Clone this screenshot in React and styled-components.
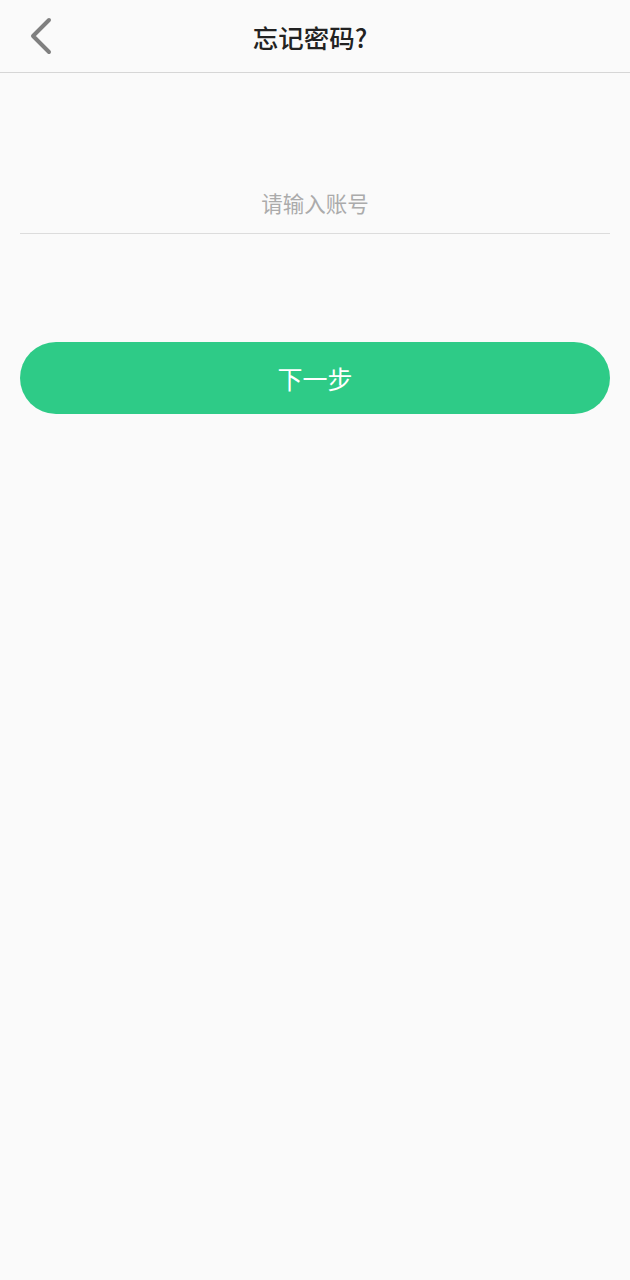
import React from 'react';
import styled, { createGlobalStyle } from 'styled-components';

const GlobalStyle = createGlobalStyle`
  html, body {
    margin: 0;
    padding: 0;
    background: #fafafa;
  }
  body {
    font-family: "Noto Sans CJK SC", "Noto Sans", sans-serif;
  }
`;

const Page = styled.div`
  min-height: 1280px;
  background: #fafafa;
  display: flex;
  flex-direction: column;
`;

const Header = styled.header`
  height: 72px;
  border-bottom: 1px solid #d6d6d6;
  display: grid;
  grid-template-columns: 70px 1fr 80px;
  align-items: center;
`;

const BackButton = styled.button`
  border: none;
  background: none;
  padding: 0 0 0 24px;
  height: 72px;
  display: flex;
  align-items: center;
  cursor: pointer;
`;

const Title = styled.h1`
  margin: 0;
  text-align: center;
  font-size: 25.5px;
  font-weight: 500;
  color: #222;
`;

const Form = styled.div`
  padding: 100px 20px 0;
  display: flex;
  flex-direction: column;
`;

const Input = styled.input`
  border: none;
  border-bottom: 1px solid #dcdcdc;
  background: transparent;
  height: 58px;
  padding: 0 0 2px;
  text-align: center;
  font-family: inherit;
  font-size: 21.5px;
  color: #333;
  outline: none;

  &::placeholder {
    color: #ababab;
  }
`;

const SubmitButton = styled.button`
  margin-top: 108px;
  height: 72px;
  border: none;
  border-radius: 36px;
  background: #2ecb87;
  color: #fff;
  font-family: inherit;
  font-size: 25px;
  cursor: pointer;
`;

function ChevronLeft() {
  return (
    <svg width="30" height="40" viewBox="0 0 30 40" fill="none">
      <path
        d="M25 4 L9 20 L25 36"
        stroke="#808080"
        strokeWidth="4"
        strokeLinecap="round"
        strokeLinejoin="round"
      />
    </svg>
  );
}

export default function App() {
  return (
    <>
      <GlobalStyle />
      <Page>
        <Header>
          <BackButton aria-label="返回">
            <ChevronLeft />
          </BackButton>
          <Title>忘记密码?</Title>
          <span />
        </Header>
        <Form>
          <Input placeholder="请输入账号" />
          <SubmitButton>下一步</SubmitButton>
        </Form>
      </Page>
    </>
  );
}
